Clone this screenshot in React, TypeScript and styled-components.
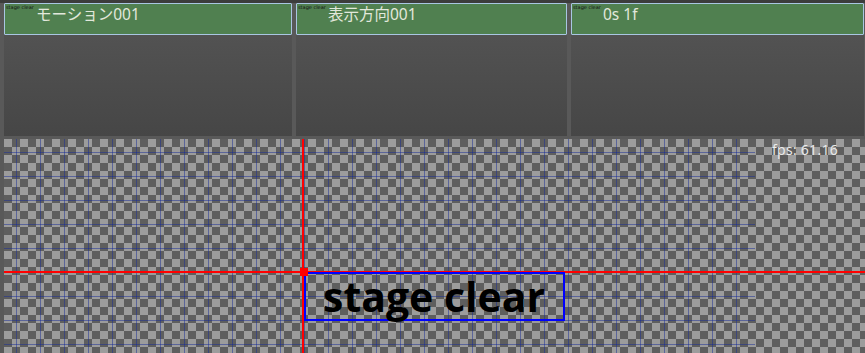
import styled, { createGlobalStyle } from 'styled-components';

const GlobalStyle = createGlobalStyle`
	html, body {
		margin: 0;
		padding: 0;
		background: #595959;
		overflow: hidden;
	}
	#root {
		width: 865px;
		height: 353px;
	}
`;

interface Track {
	label: string;
	width: number;
}

const tracks: Track[] = [
	{ label: 'モーション001', width: 288 },
	{ label: '表示方向001', width: 271 },
	{ label: '0s 1f', width: 293 },
];

const App = () => {
	return (
		<>
			<GlobalStyle />
			<Screen>
				<TopStrip />
				<TrackRow>
					{tracks.map((t) => (
						<TrackPanel key={t.label} $width={t.width}>
							<TrackHeader>
								<TinyName>stage clear</TinyName>
								<TrackLabel>{t.label}</TrackLabel>
							</TrackHeader>
						</TrackPanel>
					))}
				</TrackRow>
				<Stage>
					{/* 캔버스 위 요소들 (그리드, 원점, 텍스트 박스) */}
					<GridLines />
					<AxisX />
					<AxisY />
					<OriginDot />
					<TextBox>stage clear</TextBox>
					<Fps>fps: 61.16</Fps>
				</Stage>
			</Screen>
		</>
	);
};

export default App;

const Screen = styled.div`
	display: flex;
	flex-direction: column;
	width: 865px;
	height: 353px;
`;

const TopStrip = styled.div`
	height: 3px;
	background: #3c3c3c;
	flex-shrink: 0;
`;

const TrackRow = styled.div`
	display: flex;
	gap: 4px;
	padding-left: 4px;
	height: 133px;
	flex-shrink: 0;
`;

const TrackPanel = styled.div<{ $width: number }>`
	width: ${(p) => p.$width}px;
	flex-shrink: 0;
	display: flex;
	flex-direction: column;
	background: linear-gradient(to bottom, #565656, #464646);
`;

const TrackHeader = styled.div`
	height: 30px;
	background: #508050;
	border: 1px solid #a9c6e2;
	border-radius: 1px;
	padding-left: 1px;
	display: flex;
	align-items: flex-start;
`;

const TinyName = styled.span`
	width: 30px;
	flex-shrink: 0;
	font-family: 'DejaVu Sans', sans-serif;
	font-size: 5px;
	line-height: 6px;
	color: #111;
	white-space: nowrap;
`;

const TrackLabel = styled.span`
	font-family: 'Noto Sans', 'Noto Sans CJK JP', sans-serif;
	font-size: 15.5px;
	line-height: 20px;
	color: #e2e8dc;
`;

const Stage = styled.div`
	position: relative;
	flex: 1;
	margin-top: 3px;
	margin-left: 4px;
	overflow: hidden;
	display: flex;
	justify-content: flex-end;
	align-items: flex-start;
	padding-right: 27px;
	background: repeating-conic-gradient(#5e5e5e 0 25%, #9c9c9c 0 50%) 0 0 / 16px 16px;
`;

const GridLines = styled.div`
	position: absolute;
	left: 0;
	top: 0;
	width: 751px;
	height: 100%;
	background-image: linear-gradient(to right, rgba(25, 45, 150, 0.5) 1px, transparent 1px),
		linear-gradient(to bottom, rgba(25, 45, 150, 0.5) 1px, transparent 1px);
	background-size: 24px 24px;
	background-position: 12px 13px;
`;

const AxisX = styled.div`
	position: absolute;
	left: 0;
	right: 0;
	top: 132px;
	height: 2px;
	background: #ff0000;
`;

const AxisY = styled.div`
	position: absolute;
	top: 0;
	bottom: 0;
	left: 298px;
	width: 2px;
	background: #ff0000;
`;

const OriginDot = styled.div`
	position: absolute;
	left: 296px;
	top: 129px;
	width: 8px;
	height: 8px;
	background: #ff0000;
	z-index: 2;
`;

const TextBox = styled.div`
	position: absolute;
	left: 300px;
	top: 133px;
	width: 257px;
	height: 45px;
	padding-left: 17px;
	box-sizing: content-box;
	width: 240px;
	border: 2px solid #0000ff;
	display: flex;
	align-items: center;
	font-family: 'Open Sans', 'Noto Sans', sans-serif;
	font-weight: 700;
	font-size: 41px;
	line-height: 45px;
	color: #000;
	z-index: 1;
`;

const Fps = styled.div`
	position: relative;
	z-index: 1;
	margin-top: 1px;
	font-family: 'Open Sans', 'Noto Sans', sans-serif;
	font-size: 14px;
	letter-spacing: 0.3px;
	color: #ececec;
`;
